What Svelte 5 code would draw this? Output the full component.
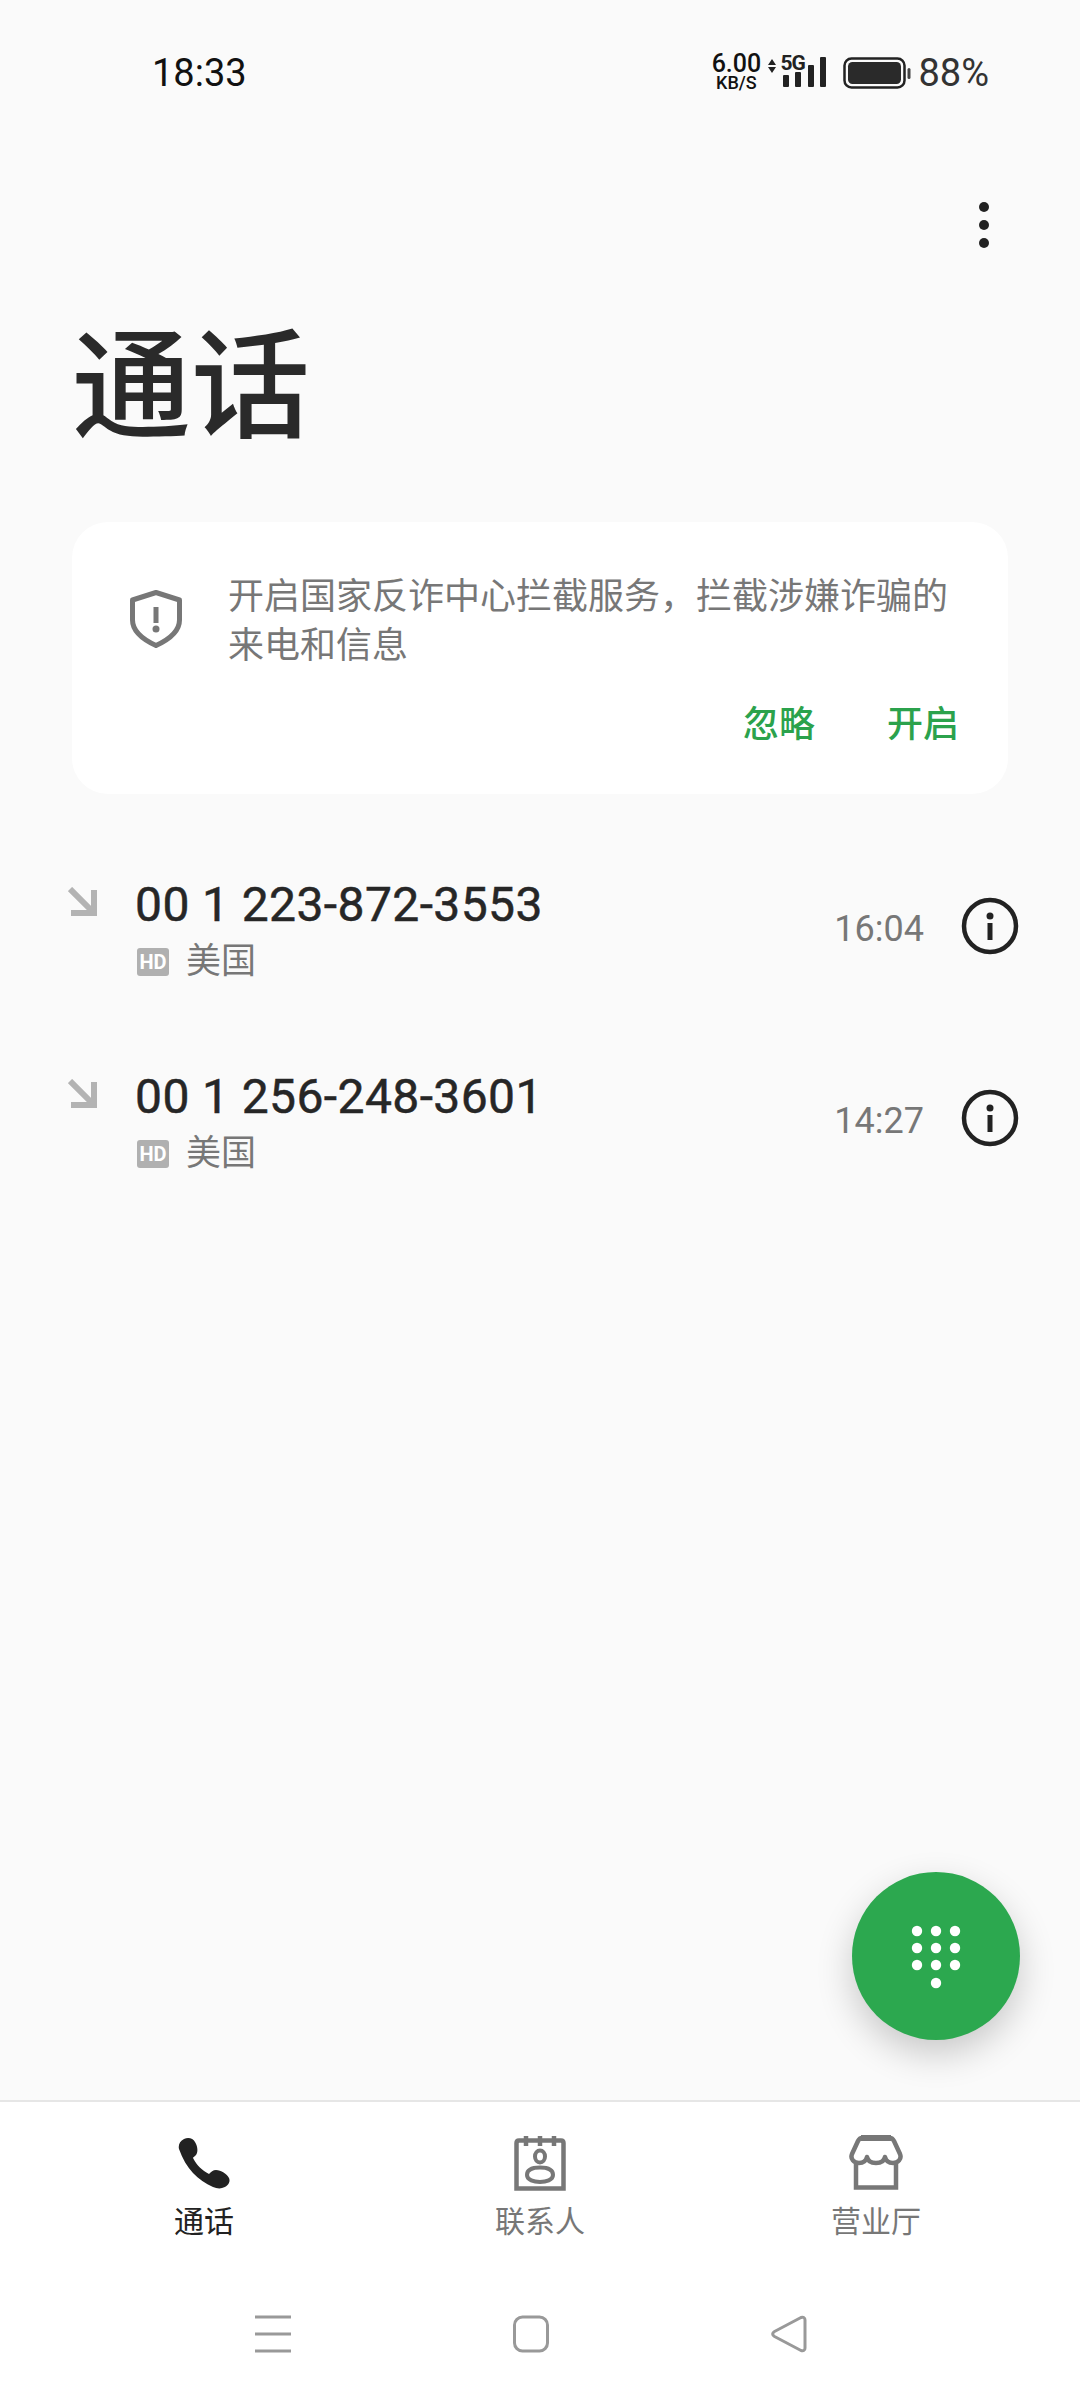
<script>
  const calls = [
    { number: '00 1 223-872-3553', region: '美国', time: '16:04' },
    { number: '00 1 256-248-3601', region: '美国', time: '14:27' }
  ];
  const dots = [[-19,-25],[0,-25],[19,-25],[-19,-8],[0,-8],[19,-8],[-19,9],[0,9],[19,9],[0,27]];
</script>

<div class="page">
  <header class="status">
    <span class="clock">18:33</span>
    <div class="indicators">
      <div class="speed"><span class="rate">6.00</span><span class="unit">KB/S</span></div>
      <div class="signal-wrap">
        <svg width="60" height="34" viewBox="0 0 60 34">
          <path d="M1 9 L5 3 L9 9 Z M1 11 L9 11 L5 17 Z" fill="#222"/>
          <rect x="16" y="19" width="6" height="12" rx="1" fill="#222"/>
          <rect x="28" y="16" width="6" height="15" rx="1" fill="#222"/>
          <rect x="41" y="9" width="6" height="22" rx="1" fill="#222"/>
          <rect x="53" y="1" width="6" height="30" rx="1" fill="#222"/>
        </svg>
        <span class="five">5G</span>
      </div>
      <svg class="battery" width="68" height="32" viewBox="0 0 68 32">
        <rect x="1.5" y="1.5" width="60" height="29" rx="7" fill="none" stroke="#222" stroke-width="2.5"/>
        <rect x="5" y="5" width="53" height="22" rx="4.5" fill="#2a2a2a"/>
        <rect x="64.5" y="11" width="3" height="11" rx="1.5" fill="#444"/>
      </svg>
      <span class="percent">88%</span>
    </div>
  </header>

  <div class="toolbar">
    <svg width="12" height="56" viewBox="0 0 12 56">
      <circle cx="6" cy="10" r="5" fill="#222"/>
      <circle cx="6" cy="28" r="5" fill="#222"/>
      <circle cx="6" cy="46" r="5" fill="#222"/>
    </svg>
  </div>

  <h1 class="title">通话</h1>

  <section class="card">
    <div class="card-body">
      <svg class="shield" width="52" height="58" viewBox="0 0 52 58">
        <path d="M26 2.5 L49.5 10 V30 C49.5 42 38 50 26 55.5 C14 50 2.5 42 2.5 30 V10 Z" fill="none" stroke="#777" stroke-width="5" stroke-linejoin="round"/>
        <rect x="23.5" y="17" width="5" height="16" fill="#777"/>
        <circle cx="26" cy="39" r="3.5" fill="#777"/>
      </svg>
      <p>开启国家反诈中心拦截服务，拦截涉嫌诈骗的来电和信息</p>
    </div>
    <div class="card-actions">
      <span>忽略</span>
      <span>开启</span>
    </div>
  </section>

  <ul class="calls">
    {#each calls as call}
      <li class="call">
        <svg class="arrow" width="30" height="30" viewBox="0 0 30 30">
          <path d="M2 2 L26 26 M26 3 V26 H3" fill="none" stroke="#b3b3b3" stroke-width="6"/>
        </svg>
        <div class="info">
          <div class="number">{call.number}</div>
          <div class="sub"><span class="hd">HD</span><span>{call.region}</span></div>
        </div>
        <span class="time">{call.time}</span>
        <svg width="60" height="60" viewBox="0 0 60 60">
          <circle cx="30" cy="30" r="26" fill="none" stroke="#222" stroke-width="4.5"/>
          <circle cx="30" cy="20" r="3.5" fill="#222"/>
          <rect x="27.5" y="27" width="5" height="17" fill="#222"/>
        </svg>
      </li>
    {/each}
  </ul>

  <div class="spacer">
    <button class="fab" aria-label="拨号">
      <svg width="60" height="70" viewBox="-30 -35 60 70">
        {#each dots as d}
          <circle cx={d[0]} cy={d[1]} r="5.2" fill="#fff"/>
        {/each}
      </svg>
    </button>
  </div>

  <nav class="tabs">
    <div class="tab active">
      <svg width="52" height="56" viewBox="0 0 52 56">
        <path d="M6 4 C10 2 15 3 17 7 C20 12 20 17 18 20 C16 22 15 22 15 23 C19 31 24 35 31 39 C33 37 35 35 38 35 C43 35 49 39 51 43 C53 48 49 52 44 53 C41 54 38 53 35 52 C20 45 8 34 1 14 C0 10 2 6 6 4 Z" fill="#222"/>
      </svg>
      <span>通话</span>
    </div>
    <div class="tab">
      <svg width="52" height="56" viewBox="0 0 52 56">
        <path d="M5 5.5 H47 Q49.5 5.5 49.5 8 V53.5 H2.5 V8 Q2.5 5.5 5 5.5 Z" fill="none" stroke="#777" stroke-width="4.5"/>
        <path d="M12 1 V11 M26 1 V11 M40 1 V11" stroke="#777" stroke-width="4.5" fill="none"/>
        <ellipse cx="26" cy="21.5" rx="5" ry="6" fill="none" stroke="#777" stroke-width="4"/>
        <path d="M13 40 C13 34 20 32.5 26 32.5 C32 32.5 39 34 39 40 C39 45 32 47 26 47 C20 47 13 45 13 40 Z" fill="none" stroke="#777" stroke-width="4"/>
      </svg>
      <span>联系人</span>
    </div>
    <div class="tab">
      <svg width="54" height="56" viewBox="0 0 54 56">
        <path d="M13 3 H41 C43 3 44 4 45 6 L51 19 C53 24 49 28 44 28 C40 28 37 26 36 22 C35 27 31 28 27 28 C23 28 19 27 18 22 C17 26 14 28 10 28 C5 28 1 24 3 19 L9 6 C10 4 11 3 13 3 Z" fill="none" stroke="#777" stroke-width="4.5" stroke-linejoin="round"/>
        <path d="M7 27 V52.5 H47 V27" fill="none" stroke="#777" stroke-width="4.5"/>
        <path d="M12 3 H42" stroke="#777" stroke-width="6"/>
      </svg>
      <span>营业厅</span>
    </div>
  </nav>

  <div class="navbar">
    <svg width="36" height="38" viewBox="0 0 36 38">
      <path d="M0 2 H36 M0 19 H36 M0 36 H36" stroke="#999" stroke-width="3"/>
    </svg>
    <svg width="36" height="38" viewBox="0 0 36 38">
      <rect x="1.5" y="2" width="33" height="34" rx="8" fill="none" stroke="#999" stroke-width="3"/>
    </svg>
    <svg width="36" height="38" viewBox="0 0 36 38">
      <path d="M30 2.5 C32.5 1.5 34 3 34 5 V33 C34 35 32.5 36.5 30 35.5 L3.5 21.5 C1 20 1 18 3.5 16.5 Z" fill="none" stroke="#999" stroke-width="3" stroke-linejoin="round"/>
    </svg>
  </div>
</div>

<style>
  :global(body) {
    margin: 0;
    background: #fafafa;
  }
  .page {
    width: 1080px;
    height: 2400px;
    display: flex;
    flex-direction: column;
    background: #fafafa;
    font-family: Roboto, "Noto Sans CJK SC", sans-serif;
    color: #222;
    overflow: hidden;
  }
  .status {
    height: 146px;
    flex: none;
    display: flex;
    align-items: center;
    justify-content: space-between;
    padding: 0 91px 0 152px;
  }
  .clock {
    font-size: 38px;
    color: #111;
    line-height: 44px;
  }
  .indicators {
    display: flex;
    align-items: center;
  }
  .speed {
    display: flex;
    flex-direction: column;
    align-items: center;
    width: 52px;
    margin-right: 5px;
    color: #111;
    font-weight: 500;
  }
  .rate {
    font-size: 25px;
    line-height: 20px;
  }
  .unit {
    font-size: 18px;
    line-height: 18px;
  }
  .signal-wrap {
    position: relative;
    width: 60px;
    height: 34px;
    margin-right: 16px;
  }
  .five {
    position: absolute;
    left: 13px;
    top: -3px;
    font-family: "Liberation Sans Narrow", Roboto, sans-serif;
    font-size: 21px;
    line-height: 20px;
    font-weight: 700;
    letter-spacing: -1px;
    color: #222;
  }
  .battery {
    margin-right: 7px;
  }
  .percent {
    font-size: 38px;
    color: #333;
    line-height: 40px;
  }
  .toolbar {
    height: 158px;
    flex: none;
    display: flex;
    align-items: center;
    justify-content: flex-end;
    padding-right: 90px;
  }
  .title {
    margin: 0;
    height: 170px;
    flex: none;
    padding-left: 72px;
    font-size: 119px;
    line-height: 170px;
    font-weight: 500;
    color: #2a2a2a;
  }
  .card {
    flex: none;
    height: 272px;
    box-sizing: border-box;
    margin: 48px 72px 0;
    background: #fff;
    border-radius: 36px;
    padding: 51px 49px 0 58px;
  }
  .card-body {
    display: flex;
    align-items: flex-start;
    padding-right: 1px;
  }
  .shield {
    flex: none;
    margin-top: 17px;
  }
  .card-body p {
    margin: 0 0 0 46px;
    font-size: 36px;
    line-height: 49px;
    color: #777;
  }
  .card-actions {
    display: flex;
    justify-content: flex-end;
    gap: 72px;
    margin-top: 30px;
    font-size: 36px;
    line-height: 48px;
    font-weight: 500;
    color: #2ba24c;
  }
  .calls {
    list-style: none;
    margin: 36px 0 0;
    padding: 0;
    flex: none;
  }
  .call {
    height: 192px;
    box-sizing: border-box;
    display: flex;
    align-items: center;
    padding: 0 60px 0 68px;
  }
  .arrow {
    align-self: flex-start;
    margin-top: 57px;
    flex: none;
    margin-right: 37px;
  }
  .info {
    flex: 1;
    align-self: flex-start;
    padding-top: 45px;
  }
  .number {
    font-size: 48px;
    line-height: 60px;
    font-weight: 400;
    letter-spacing: 0.4px;
    -webkit-text-stroke: 0.5px #262626;
    color: #262626;
  }
  .sub {
    display: flex;
    align-items: center;
    margin-top: 2px;
    font-size: 35px;
    line-height: 50px;
    color: #777;
  }
  .hd {
    width: 32px;
    height: 28px;
    border-radius: 3px;
    background: #b0b0b0;
    color: #fff;
    font-size: 20px;
    line-height: 28px;
    font-weight: 700;
    text-align: center;
    margin: 0 17px 0 2px;
  }
  .time {
    font-size: 36px;
    line-height: 42px;
    color: #777;
    margin: 5px 36px 0 0;
  }
  .spacer {
    flex: 1;
    position: relative;
  }
  .fab {
    position: absolute;
    right: 60px;
    bottom: 60px;
    width: 168px;
    height: 168px;
    padding: 0;
    border: 0;
    border-radius: 50%;
    background: #2ca84f;
    box-shadow: 0 14px 36px rgba(0, 0, 0, 0.2);
    display: flex;
    align-items: center;
    justify-content: center;
  }
  .tabs {
    flex: none;
    height: 180px;
    box-sizing: border-box;
    border-top: 2px solid #e6e6e6;
    background: #fff;
    padding: 33px 36px 0;
    display: grid;
    grid-template-columns: repeat(3, 336px);
  }
  .tab {
    display: flex;
    flex-direction: column;
    align-items: center;
    font-size: 30px;
    line-height: 40px;
    color: #777;
  }
  .tab span {
    margin-top: 11px;
  }
  .tab.active {
    color: #222;
  }
  .navbar {
    flex: none;
    height: 120px;
    background: #fff;
    display: flex;
    align-items: flex-start;
    gap: 222px;
    padding: 35px 0 0 255px;
    box-sizing: border-box;
  }
</style>
